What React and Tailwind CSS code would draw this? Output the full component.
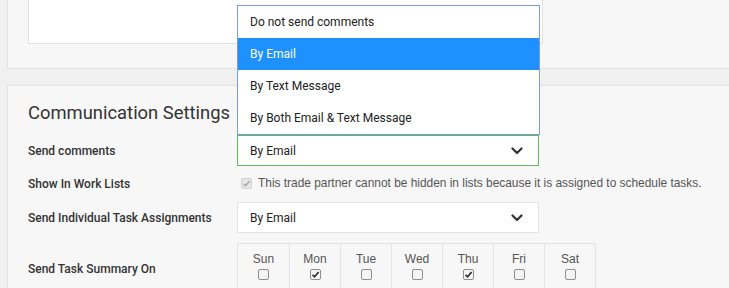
const options = [
  "Do not send comments",
  "By Email",
  "By Text Message",
  "By Both Email & Text Message",
];

const days = [
  { name: "Sun", on: false },
  { name: "Mon", on: true },
  { name: "Tue", on: false },
  { name: "Wed", on: false },
  { name: "Thu", on: true },
  { name: "Fri", on: false },
  { name: "Sat", on: false },
];

const Chevron = () => (
  <svg width="12" height="8" viewBox="0 0 12 8" className="shrink-0">
    <path d="M1.5 1.5 L6 6 L10.5 1.5" fill="none" stroke="#333" strokeWidth="2.2" strokeLinecap="round" strokeLinejoin="round" />
  </svg>
);

const Box = ({ on, disabled }) => (
  <span
    className={`flex h-[11px] w-[11px] items-center justify-center rounded-[2px] border ${
      disabled ? "border-[#cfcfcf] bg-[#e8e8e8]" : "border-[#8f8f8f] bg-[#f4f4f4]"
    }`}
  >
    {on && (
      <svg width="9" height="9" viewBox="0 0 9 9">
        <path
          d="M1.5 4.8 L3.6 6.8 L7.6 2"
          fill="none"
          stroke={disabled ? "#b0b0b0" : "#333"}
          strokeWidth="1.8"
        />
      </svg>
    )}
  </span>
);

const Row = ({ label, className = "", children }) => (
  <div className={`flex items-center ${className}`}>
    <div className="w-[209px] shrink-0 text-[12px] font-medium text-[#333]">{label}</div>
    {children}
  </div>
);

export default function App() {
  return (
    <div
      className="h-[288px] w-[729px] overflow-hidden bg-[#f0f0f0] pl-[7px]"
      style={{ fontFamily: "Roboto, 'Liberation Sans', sans-serif" }}
    >
      {/* top panel, cut off at the top */}
      <div className="-mt-[20px] w-[740px] border border-t-0 border-[#e3e3e3] bg-[#f7f7f7] px-5 pb-6">
        <div className="h-[64px] w-[515px] border border-t-0 border-[#e2e2e2] bg-white" />
      </div>

      <div className="mt-4 h-[220px] w-[740px] border border-[#e3e3e3] bg-[#f7f7f7] px-5 pt-[13px]">
        <h2 className="mb-[8px] h-[28px] text-[18.4px] leading-[28px] font-normal text-[#333]">
          Communication Settings
        </h2>

        <Row label="Send comments" className="h-[31px]">
          <div className="relative">
            <div className="absolute bottom-full left-0 w-[303px] border border-[#7f9bd6] bg-white">
              {options.map((opt, i) => (
                <div
                  key={opt}
                  className={`flex h-[32px] items-center px-3 text-[12px] ${
                    i === 1 ? "bg-[#1e90ff] text-white" : "text-[#222]"
                  }`}
                >
                  {opt}
                </div>
              ))}
            </div>
            <div className="flex h-[31px] w-[302px] items-center justify-between border border-[#5fb85c] bg-white pr-[15px] pl-3 text-[12px] text-[#222]">
              By Email
              <Chevron />
            </div>
          </div>
        </Row>

        <Row label="Show In Work Lists" className="mt-[6px] h-[24px]">
          <div
            className="flex items-center gap-[6px] pl-1 text-[11.9px] text-[#555]"
            style={{ fontFamily: "'Liberation Sans', Arial, sans-serif" }}
          >
            <Box on disabled />
            This trade partner cannot be hidden in lists because it is assigned to schedule tasks.
          </div>
        </Row>

        <Row label="Send Individual Task Assignments" className="mt-[6px] h-[31px]">
          <div className="flex h-[31px] w-[302px] items-center justify-between border border-[#e3e3e3] bg-white pr-[15px] pl-3 text-[12px] text-[#222]">
            By Email
            <Chevron />
          </div>
        </Row>

        <Row label="Send Task Summary On" className="mt-[10px]">
          <div
            className="flex border-t border-l border-[#e3e3e3] bg-[#f7f7f7]"
            style={{ fontFamily: "'Liberation Sans', Arial, sans-serif" }}
          >
            {days.map((d, i) => (
              <div
                key={d.name}
                className={`flex h-[50px] flex-col items-center border-r border-[#e3e3e3] pt-[8px] ${
                  i === 0 ? "w-[52px]" : "w-[51px]"
                }`}
              >
                <span className="text-[12px] leading-[14px] text-[#555]">{d.name}</span>
                <span className="mt-[3px]">
                  <Box on={d.on} />
                </span>
              </div>
            ))}
          </div>
        </Row>
      </div>
    </div>
  );
}
